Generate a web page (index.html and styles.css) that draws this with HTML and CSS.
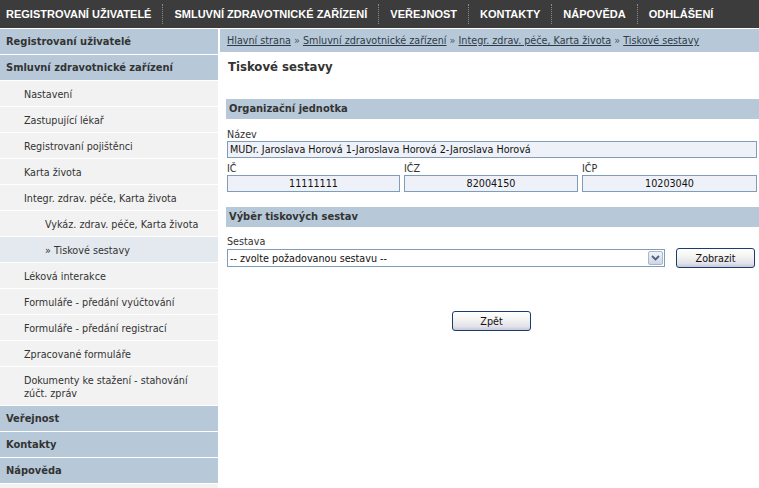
FILE: index.html
```html
<!DOCTYPE html>
<html lang="cs">
<head>
<meta charset="utf-8">
<title>Tiskové sestavy</title>
<link rel="stylesheet" href="styles.css">
</head>
<body>
<nav class="topnav">
  <a class="tn-item first">REGISTROVANÍ UŽIVATELÉ</a><span class="tn-sep"></span>
  <a class="tn-item">SMLUVNÍ ZDRAVOTNICKÉ ZAŘÍZENÍ</a><span class="tn-sep"></span>
  <a class="tn-item">VEŘEJNOST</a><span class="tn-sep"></span>
  <a class="tn-item">KONTAKTY</a><span class="tn-sep"></span>
  <a class="tn-item">NÁPOVĚDA</a><span class="tn-sep"></span>
  <a class="tn-item">ODHLÁŠENÍ</a>
</nav>
<div class="layout">
  <aside class="sidebar">
    <a class="sb-head">Registrovaní uživatelé</a>
    <a class="sb-head">Smluvní zdravotnické zařízení</a>
    <a class="sb-item l1">Nastavení</a>
    <a class="sb-item l1">Zastupující lékař</a>
    <a class="sb-item l1">Registrovaní pojištěnci</a>
    <a class="sb-item l1">Karta života</a>
    <a class="sb-item l1">Integr. zdrav. péče, Karta života</a>
    <a class="sb-item l2">Vykáz. zdrav. péče, Karta života</a>
    <a class="sb-item l2 active">» Tiskové sestavy</a>
    <a class="sb-item l1">Léková interakce</a>
    <a class="sb-item l1">Formuláře - předání vyúčtování</a>
    <a class="sb-item l1">Formuláře - předání registrací</a>
    <a class="sb-item l1">Zpracované formuláře</a>
    <a class="sb-item l1">Dokumenty ke stažení - stahování zúčt. zpráv</a>
    <a class="sb-head">Veřejnost</a>
    <a class="sb-head">Kontakty</a>
    <a class="sb-head">Nápověda</a>
    <a class="sb-item l1 tail">&nbsp;</a>
  </aside>
  <main class="main">
    <div class="crumbs">
      <a>Hlavní strana</a> » <a>Smluvní zdravotnické zařízení</a> » <a>Integr. zdrav. péče, Karta života</a> » <a>Tiskové sestavy</a>
    </div>
    <div class="content">
      <h1 class="title">Tiskové sestavy</h1>
      <div class="section-head">Organizační jednotka</div>
      <div class="field">
        <div class="label">Název</div>
        <div class="box">MUDr. Jaroslava Horová 1-Jaroslava Horová 2-Jaroslava Horová</div>
      </div>
      <div class="row3">
        <div class="field">
          <div class="label">IČ</div>
          <div class="box center">11111111</div>
        </div>
        <div class="field">
          <div class="label">IČZ</div>
          <div class="box center">82004150</div>
        </div>
        <div class="field">
          <div class="label">IČP</div>
          <div class="box center">10203040</div>
        </div>
      </div>
      <div class="section-head second">Výběr tiskových sestav</div>
      <div class="field">
        <div class="label tight">Sestava</div>
        <div class="select-row">
          <div class="select">
            <span class="select-text">-- zvolte požadovanou sestavu --</span>
            <span class="select-btn"><svg width="9" height="6" viewBox="0 0 9 6"><path d="M1 1 L4.5 4.5 L8 1" fill="none" stroke="#4d6185" stroke-width="1.8"/></svg></span>
          </div>
          <button class="btn">Zobrazit</button>
        </div>
      </div>
      <div class="back-row">
        <button class="btn">Zpět</button>
      </div>
    </div>
  </main>
</div>
</body>
</html>
```
FILE: styles.css
```css
html, body {
  margin: 0;
  padding: 0;
  background: #fff;
}
body {
  font-family: "DejaVu Sans Condensed", "DejaVu Sans", sans-serif;
  font-size: 10.7px;
  color: #333;
}
a { color: inherit; text-decoration: none; }

.topnav {
  height: 28px;
  background: #3c3c3c;
  display: flex;
  align-items: center;
}
.tn-item {
  font-family: "Liberation Sans", Arial, sans-serif;
  font-weight: bold;
  font-size: 11px;
  color: #fff;
  padding: 0 11px;
  white-space: nowrap;
}
.tn-item.first { padding-left: 6px; }
.tn-sep {
  width: 0;
  height: 20px;
  border-left: 1px dotted #8a8a8a;
}

.layout {
  display: flex;
  margin-top: 1px;
  gap: 2px;
}
.sidebar {
  width: 218px;
  flex: none;
  display: flex;
  flex-direction: column;
}
.sb-head, .sb-item {
  display: block;
  line-height: 13px;
  padding: 6px 8px 6px 6px;
  border-bottom: 1px solid #fff;
}
.sb-head {
  background: #b7c9d9;
  font-weight: bold;
  font-size: 11px;
  color: #333;
}
.sb-item {
  background: #f2f2f2;
  color: #333;
}
.sb-item.l1 { padding-left: 24px; padding-top: 7px; padding-bottom: 5px; }
.sb-item.l2 { padding-left: 45px; padding-top: 7px; padding-bottom: 5px; }
.sb-item.active { background: #e3e9ee; }
.sb-item.tail { padding-top: 0; padding-bottom: 0; height: 10px; }

.main {
  flex: 1;
  min-width: 0;
}
.crumbs {
  background: #b7c9d9;
  height: 23px;
  line-height: 23px;
  padding-left: 7px;
  color: #4a5a6a;
  white-space: nowrap;
}
.crumbs a {
  color: #2f3b48;
  text-decoration: underline;
}
.content {
  padding: 0 2px 0 6px;
}
.title {
  margin: 7px 0 0 2px;
  font-size: 13px;
  line-height: 16px;
  font-weight: bold;
  color: #333;
}
.section-head {
  margin: 24px -2px 0 0;
  height: 20px;
  line-height: 20px;
  background: #b7c9d9;
  padding-left: 3px;
  font-weight: bold;
  font-size: 11px;
  color: #333;
}
.section-head.second { margin-top: 15px; }
.field {
  display: flex;
  flex-direction: column;
  margin-left: 1px;
}
.label {
  margin-top: 9px;
  line-height: 13px;
  color: #333;
}
.label.tight { margin-top: 8px; }
.box {
  height: 15px;
  line-height: 15px;
  border: 1px solid #7f9db9;
  background: #eef2f8;
  padding: 0 2px;
  color: #111;
  white-space: nowrap;
  overflow: hidden;
}
.box.center { text-align: center; }
.row3 {
  display: grid;
  grid-template-columns: 174px 174px 1fr;
  gap: 4px;
  margin-top: 5px;
}
.row3 .field { margin-left: 0; }
.row3 .field:first-child { margin-left: 1px; }
.row3 .label { margin-top: 0; line-height: 12px; }

.select-row {
  display: flex;
  align-items: center;
  gap: 11px;
}
.select {
  width: 436px;
  height: 16px;
  border: 1px solid #7f9db9;
  background: #fff;
  display: flex;
  align-items: center;
  justify-content: space-between;
}
.select-text {
  padding-left: 2px;
  color: #111;
}
.select-btn {
  width: 15px;
  height: 14px;
  margin-right: 1px;
  border: 1px solid #a8b6c8;
  background: linear-gradient(#f2f4f8, #cfd6e4);
  border-radius: 2px;
  display: flex;
  align-items: center;
  justify-content: center;
  box-sizing: border-box;
}
.btn {
  font-family: "DejaVu Sans Condensed", "DejaVu Sans", sans-serif;
  font-size: 10.7px;
  color: #111;
  width: 79px;
  height: 20px;
  padding: 0;
  border: 1px solid #1c3c70;
  border-radius: 3px;
  background: linear-gradient(#ffffff 0%, #f4f4f2 40%, #e2e2ea 80%, #c8c8d8 100%);
  cursor: pointer;
}
.back-row {
  display: flex;
  justify-content: center;
  margin-top: 43px;
}
```
